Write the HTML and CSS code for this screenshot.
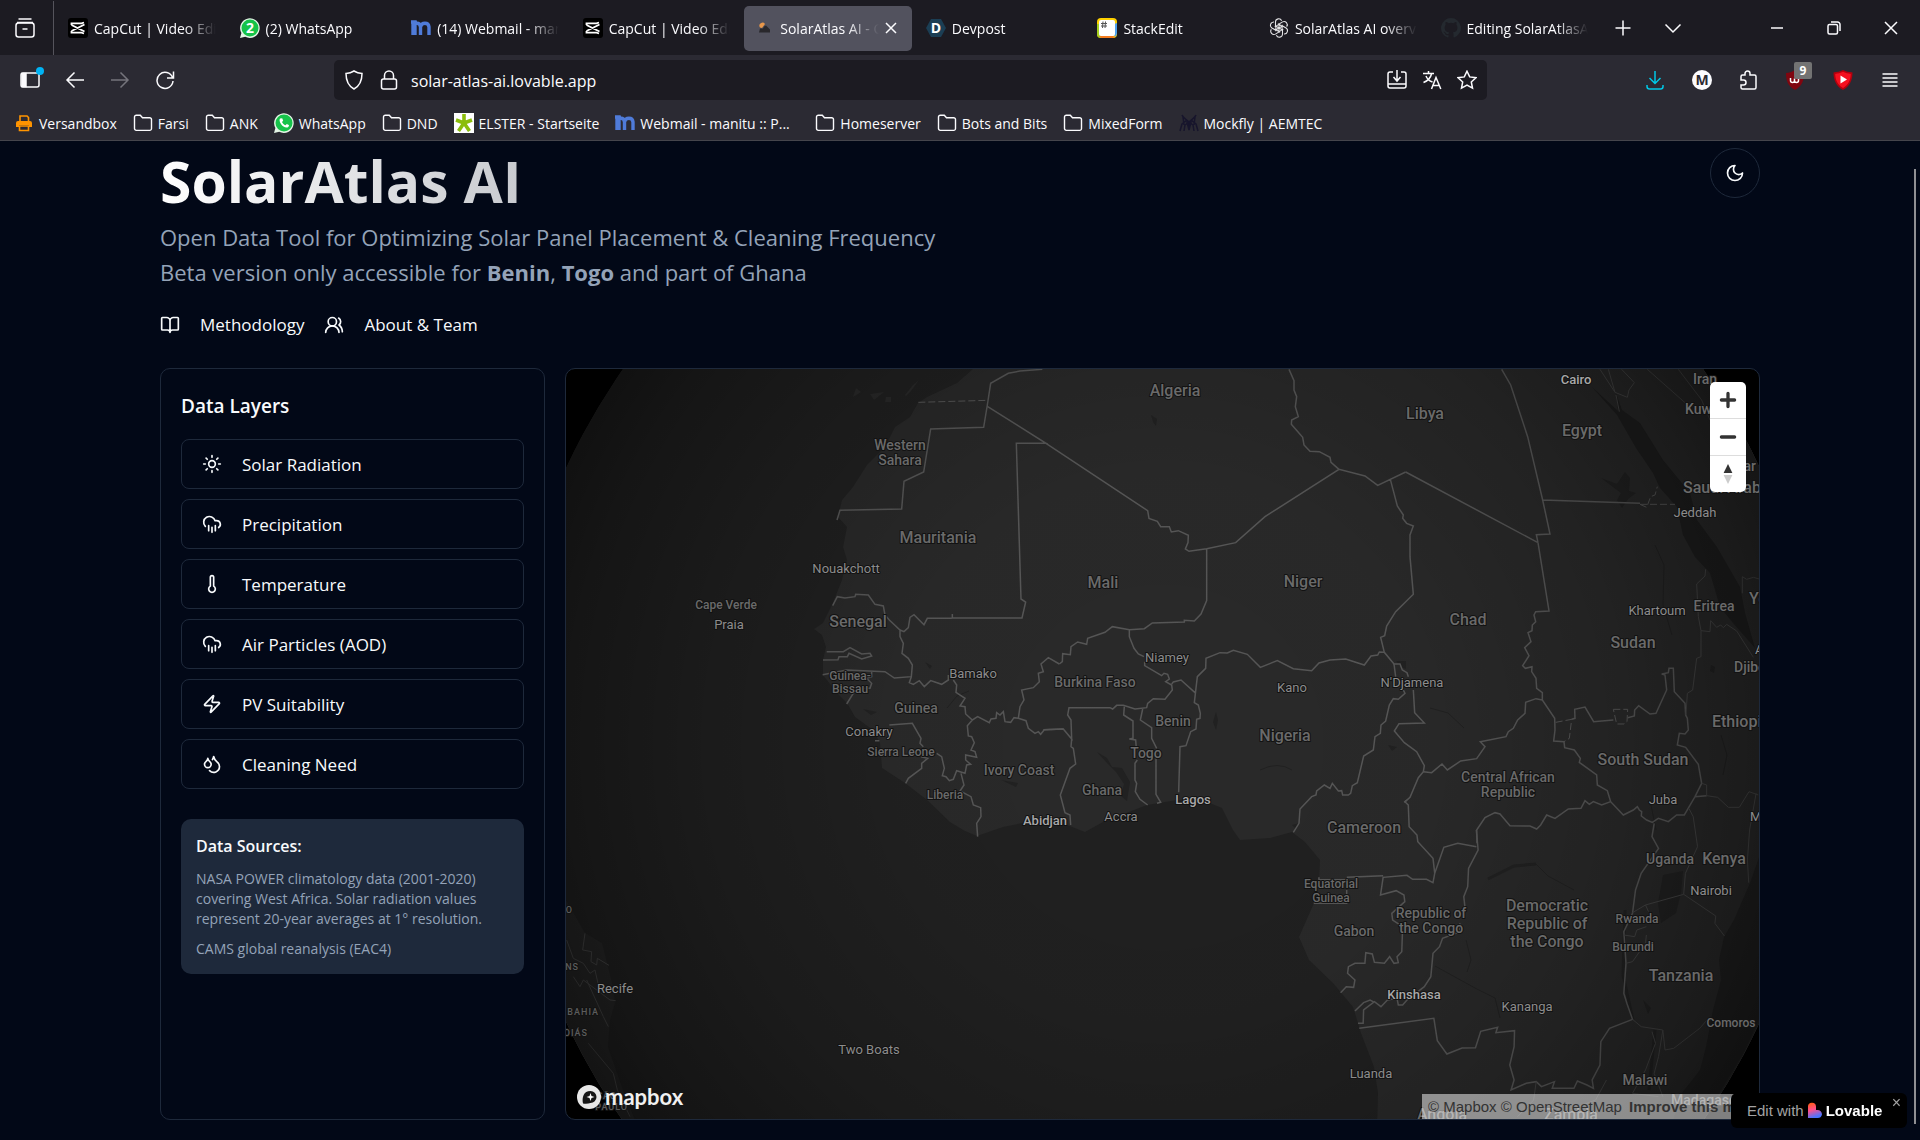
FILE: index.html
```html
<!DOCTYPE html>
<html lang="en">
<head>
<meta charset="utf-8">
<meta name="viewport" content="width=device-width, initial-scale=1">
<title>SolarAtlas AI</title>
<link rel="stylesheet" href="styles.css">
</head>
<body>
<svg class="defs" aria-hidden="true">
  <symbol id="i-folder" viewBox="0 0 20 20"><path d="M1.5 4a1.8 1.8 0 0 1 1.8-1.800h4l2.200 2.600h7.200a1.800 1.800 0 0 1 1.800 1.800v9a1.800 1.800 0 0 1-1.800 1.800H3.300a1.800 1.800 0 0 1-1.800-1.800z" fill="none" stroke="currentColor" stroke-width="1.400"/></symbol>
  <symbol id="i-capcut" viewBox="0 0 20 20"><rect width="20" height="20" rx="3" fill="#000"/><path d="M3.500 7V5.300h10L16 4.500M3.500 7l13 6.500M3.500 13v1.700h10l2.500.8M3.500 13l13-6.500" fill="none" stroke="#fff" stroke-width="1.800"/></symbol>
  <symbol id="i-manitu" viewBox="0 0 20 20"><path d="M0 4h4v13M2 17V4M2 9c1-5 7-5 7.500 0v8M9.500 9c1-5 8-5 8.500 0v8" fill="none" stroke="#4f7bd9" stroke-width="3.400"/></symbol>
  <symbol id="i-rain" viewBox="0 0 24 24"><path d="M4 14.899A7 7 0 1 1 15.710 8h1.790a4.500 4.500 0 0 1 2.500 8.242M16 14v6M8 14v6M12 16v6"/></symbol>
</svg>

<div class="browser">
  <div class="tabbar">
    <button class="tabview" aria-label="Recent browsing"><svg viewBox="0 0 20 20" class="line"><path d="M3.500 1h13M2 4.500h16" /><rect x="1" y="5" width="18" height="14" rx="2.500"/><path d="M7.500 11h5"/></svg></button>
    <nav class="tabs" aria-label="Tabs">
      <a class="tab" href="#"><svg class="ico"><use href="#i-capcut"/></svg><span>CapCut | Video Editor</span></a>
      <a class="tab" href="#"><svg class="ico" viewBox="0 0 20 20"><path d="M0 20l1.400-5A9.800 9.800 0 1 1 5.200 18.700z" fill="#e4f5e6"/><circle cx="10" cy="10" r="8.500" fill="#16c34a"/><text x="10" y="15" class="fav-text">2</text></svg><span>(2) WhatsApp</span></a>
      <a class="tab" href="#"><svg class="ico"><use href="#i-manitu"/></svg><span>(14) Webmail - manitu</span></a>
      <a class="tab" href="#"><svg class="ico"><use href="#i-capcut"/></svg><span>CapCut | Video Editor</span></a>
      <div class="tab tab-active"><svg class="ico" viewBox="0 0 20 20"><path d="M6 9.500a3 3 0 1 1 5-3.500L8 10z" fill="#e8974a"/><path d="M5 14.500l1-4h3l1-2 2-1 2 2 2 2v3z" fill="#29282c"/></svg><span>SolarAtlas AI - Open</span><button aria-label="Close tab"><svg viewBox="0 0 12 12" class="line"><path d="M1 1l10 10M11 1L1 11"/></svg></button></div>
      <a class="tab" href="#"><svg class="ico" viewBox="0 0 20 20"><path d="M5 1h10l5 9-5 9H5l-5-9z" fill="#1b3e54"/><text x="10" y="15" class="fav-text">D</text></svg><span>Devpost</span></a>
      <a class="tab" href="#"><svg class="ico" viewBox="0 0 20 20"><rect width="20" height="20" rx="4" fill="#ffd100"/><path d="M0 6v10a4 4 0 0 0 4 4h8L6 6z" fill="#a5cf1f"/><path d="M20 5v10a5 5 0 0 1-2 4L12 8z" fill="#4ea1ee"/><path d="M2 18h14l2 1-2 1H4z" fill="#f47c20"/><rect x="2" y="2" width="16" height="16" rx="2" fill="#fff"/><path d="M4 5.500h6M4 8h6M6 3.500l-.5 6.500M8.500 3.500L8 10" stroke="#555" stroke-width="1" fill="none"/></svg><span>StackEdit</span></a>
      <a class="tab" href="#"><svg class="ico" viewBox="0 0 20 20"><g fill="none" stroke="#e4e4e6" stroke-width="1.200" transform="translate(1 1) scale(.9)"><path id="knot" d="M10 10.500V5.500l4-2.300a3.600 3.600 0 0 1 4.500 5.300M13.500 8L8.700 5.200"/><use href="#knot" transform="rotate(60 10 10)"/><use href="#knot" transform="rotate(120 10 10)"/><use href="#knot" transform="rotate(180 10 10)"/><use href="#knot" transform="rotate(240 10 10)"/><use href="#knot" transform="rotate(300 10 10)"/></g></svg><span>SolarAtlas AI overview</span></a>
      <a class="tab" href="#"><svg class="ico" viewBox="0 0 16 16"><path fill="#24292f" d="M8 0a8 8 0 0 0-2.530 15.590c.4.070.55-.17.55-.38v-1.490C4 14.090 3.480 13.200 3.320 12.750c-.09-.23-.48-.94-.82-1.130-.28-.15-.68-.52-.01-.53.63-.01 1.080.58 1.230.82.720 1.210 1.870.87 2.330.66.070-.52.280-.87.510-1.070-1.780-.2-3.640-.89-3.640-3.950 0-.87.310-1.590.82-2.150-.08-.2-.36-1.020.08-2.120 0 0 .67-.21 2.200.82a7.600 7.600 0 0 1 4 0c1.530-1.040 2.200-.82 2.200-.82.440 1.100.16 1.920.08 2.120.51.560.82 1.270.82 2.150 0 3.070-1.870 3.750-3.650 3.950.29.250.54.73.54 1.480v2.200c0 .21.150.46.550.38A8 8 0 0 0 8 0z"/></svg><span>Editing SolarAtlasAI</span></a>
    </nav>
    <div class="tab-tools">
      <button aria-label="New tab"><svg viewBox="0 0 18 18" class="line"><path d="M9 1.500v15M1.500 9h15"/></svg></button>
      <button aria-label="List all tabs"><svg viewBox="0 0 18 18" class="line"><path d="M1.500 5.500L9 13l7.500-7.500"/></svg></button>
    </div>
    <div class="win-tools">
      <button aria-label="Minimize"><svg viewBox="0 0 14 14" class="line"><path d="M1 7h12"/></svg></button>
      <button aria-label="Restore"><svg viewBox="0 0 14 14" class="line"><rect x="1" y="3.500" width="9.500" height="9.500" rx="1.500"/><path d="M4 1h6.500A2.500 2.500 0 0 1 13 3.500V10"/></svg></button>
      <button aria-label="Close"><svg viewBox="0 0 14 14" class="line"><path d="M1 1l12 12M13 1L1 13"/></svg></button>
    </div>
  </div>

  <div class="toolbar">
    <div class="nav-tools">
      <button aria-label="Sidebar" class="has-dot"><svg viewBox="0 0 20 20" class="line"><rect x="1" y="3" width="18" height="14" rx="2"/><path d="M2 3.500h4v13H2z" fill="currentColor"/></svg></button>
      <button aria-label="Back"><svg viewBox="0 0 20 20" class="line"><path d="M19 10H2M9.500 2.500L2 10l7.500 7.500"/></svg></button>
      <button aria-label="Forward" class="dim"><svg viewBox="0 0 20 20" class="line"><path d="M1 10h17M10.500 2.500L18 10l-7.500 7.500"/></svg></button>
      <button aria-label="Reload"><svg viewBox="0 0 20 20" class="line"><path d="M17.500 7.500A8 8 0 1 0 18 11M18.500 1.500v6.500H12"/></svg></button>
    </div>
    <div class="urlbar">
      <svg class="ico" viewBox="0 0 20 20"><path class="line" d="M10 1c2.500 1.600 5 2.300 8 2.500 0 7-1.500 12-8 15.500C3.500 15.500 2 10.500 2 3.500 5 3.300 7.500 2.600 10 1z"/></svg>
      <svg class="ico" viewBox="0 0 20 20"><g class="line"><rect x="2.500" y="9" width="15" height="10" rx="2"/><path d="M5.500 9V5.500a4.500 4.500 0 0 1 9 0V9"/></g></svg>
      <input type="text" aria-label="Address" value="solar-atlas-ai.lovable.app">
      <button aria-label="Install"><svg viewBox="0 0 20 20" class="line"><path d="M6 2H3a2 2 0 0 0-2 2v12a2 2 0 0 0 2 2h14a2 2 0 0 0 2-2V4a2 2 0 0 0-2-2h-3M1 14h18M10 0v10M6.500 7l3.500 4 3.500-4"/></svg></button>
      <button aria-label="Translate"><svg viewBox="0 0 20 20" class="line"><path d="M1 3.500h11M6.500 1v2.500M9.500 4c-1 4-4 7-8 8.500M4 6c1 2.500 3.500 5 6.500 6M9.500 19l4.500-11.500L18.800 19M11 15.500h6.500"/></svg></button>
      <button aria-label="Bookmark"><svg viewBox="0 0 20 20" class="line"><path d="M10 1.200l2.700 5.700 6.200.8-4.600 4.300 1.200 6.200L10 15.200l-5.500 3 1.200-6.200L1.100 7.700l6.200-.8z"/></svg></button>
    </div>
    <div class="ext-tools">
      <button aria-label="Downloads" class="cyan"><svg viewBox="0 0 20 20" class="line"><path d="M10 1v12M4.500 8l5.500 5.500L15.500 8M2 15v1.500A2.500 2.500 0 0 0 4.500 19h11a2.500 2.500 0 0 0 2.500-2.500V15"/></svg></button>
      <button aria-label="Account"><svg viewBox="0 0 20 20"><circle cx="10" cy="10" r="10" fill="#fbfbfe"/><text x="10" y="15" class="acct">M</text></svg></button>
      <button aria-label="Extensions"><svg viewBox="0 0 20 20" class="line"><path d="M6 5V3.500a2.500 2.500 0 0 1 5 0V5h4.500A1.500 1.500 0 0 1 17 6.500v11a1.500 1.500 0 0 1-1.500 1.500h-12A1.500 1.500 0 0 1 2 17.500V15h2.500a2.500 2.500 0 0 0 0-5H2V6.500A1.500 1.500 0 0 1 3.500 5z"/></svg></button>
      <button aria-label="Blocker, 9" class="blocker"><svg viewBox="0 0 20 20"><path d="M9 0c3 2 6 3 9 3 0 8-2 13-9 17C2 16 0 11 0 3c3 0 6-1 9-3z" fill="#800610"/><path d="M4.500 8v2.500a2 2 0 0 0 4 0V8.500v2a2 2 0 0 0 4 0V8" fill="none" stroke="#fff" stroke-width="1.500"/></svg><span class="count">9</span></button>
      <button aria-label="Ad blocker"><svg viewBox="0 0 20 20"><path d="M10 0c3 1.500 6 2 9.500 2.500C19.500 10 17 16 10 20 3 16 .5 10 .5 2.500 4 2 7 1.500 10 0z" fill="#b3000d"/><path d="M10 1.800c2.600 1.200 5 1.800 7.800 2.100C17.600 10 15.500 14.700 10 18z M10 1.800C7.400 3 5 3.600 2.200 3.900 2.400 10 4.500 14.700 10 18z" fill="#f5101f"/><path d="M7.500 5.500v8l6.500-4z" fill="#fff"/></svg></button>
      <button aria-label="Menu"><svg viewBox="0 0 20 20" class="line"><path d="M2.500 4h15M2.500 8h15M2.500 12h15M2.500 16h15"/></svg></button>
    </div>
  </div>

  <nav class="bookmarks" aria-label="Bookmarks">
    <a href="#"><svg class="ico" viewBox="0 0 20 20"><path d="M6 8V3h7l1.500 1.500V8" fill="none" stroke="#ff9400" stroke-width="1.600"/><path d="M2 14v-4a2 2 0 0 1 2-2h12a2 2 0 0 1 2 2v4h-3v-2H5v2z" fill="#ff9400"/><path d="M5.500 13v4.500h9V13z" fill="none" stroke="#ff9400" stroke-width="1.600"/></svg>Versandbox</a>
    <a href="#"><svg class="ico"><use href="#i-folder"/></svg>Farsi</a>
    <a href="#"><svg class="ico"><use href="#i-folder"/></svg>ANK</a>
    <a href="#"><svg class="ico" viewBox="0 0 20 20"><path d="M0 20l1.400-5A9.800 9.800 0 1 1 5.200 18.700z" fill="#e4f5e6"/><circle cx="10" cy="10" r="8.500" fill="#16c34a"/><path d="M6 5.500c-2 3 3 10 7.500 9 1.500-.5 1.700-2 1.300-2.400l-2-1.100-1.300 1.300c-1.600-.6-2.800-1.800-3.500-3.400L9.200 7.700 8.200 5.300z" fill="#fff"/></svg>WhatsApp</a>
    <a href="#"><svg class="ico"><use href="#i-folder"/></svg>DND</a>
    <a href="#"><svg class="ico" viewBox="0 0 20 20"><path fill="#fff" d="M0 0h20v20H0z"/><path d="M10 10V1M10 10l8-3M10 10l5.500 8M10 10l-5.500 8M10 10L2 7" stroke="#8bbd0c" stroke-width="3.600"/></svg>ELSTER - Startseite</a>
    <a href="#" class="wide"><svg class="ico"><use href="#i-manitu"/></svg>Webmail - manitu :: P...</a>
    <a href="#"><svg class="ico"><use href="#i-folder"/></svg>Homeserver</a>
    <a href="#"><svg class="ico"><use href="#i-folder"/></svg>Bots and Bits</a>
    <a href="#"><svg class="ico"><use href="#i-folder"/></svg>MixedForm</a>
    <a href="#"><svg class="ico" viewBox="0 0 20 20"><g fill="none" stroke="#17152c" stroke-width="1.500"><path d="M3 2c1 3 4 4 7 7 3-3 6-4 7-7M1 18l2-7 5-4M19 18l-2-7-5-4M5 18l1-6 3-2M15 18l-1-6-3-2M4 4l1 8M16 4l-1 8"/><path d="M8 9h4l-2 8z" fill="#17152c"/></g></svg>Mockfly | AEMTEC</a>
  </nav>
</div>

<main class="site">
  <header class="site-head">
    <div>
      <h1>SolarAtlas AI</h1>
      <p>Open Data Tool for Optimizing Solar Panel Placement &amp; Cleaning Frequency</p>
      <p>Beta version only accessible for <strong>Benin</strong>, <strong>Togo</strong> and part of Ghana</p>
      <nav class="links" aria-label="Site">
        <a href="#"><svg viewBox="0 0 24 24" class="lucide"><path d="M12 7v14M3 18a1 1 0 0 1-1-1V4a1 1 0 0 1 1-1h5a4 4 0 0 1 4 4 4 4 0 0 1 4-4h5a1 1 0 0 1 1 1v13a1 1 0 0 1-1 1h-6a3 3 0 0 0-3 3 3 3 0 0 0-3-3z"/></svg>Methodology</a>
        <a href="#"><svg viewBox="0 0 24 24" class="lucide"><path d="M18 21a8 8 0 0 0-16 0"/><circle cx="10" cy="8" r="5"/><path d="M22 20c0-3.370-2-6.500-4-8a5 5 0 0 0-.45-8.300"/></svg>About &amp; Team</a>
      </nav>
    </div>
    <button class="theme" aria-label="Toggle theme"><svg viewBox="0 0 24 24" class="lucide"><path d="M12 3a6 6 0 0 0 9 9 9 9 0 1 1-9-9Z"/></svg></button>
  </header>

  <div class="workspace">
    <section class="panel">
      <h2>Data Layers</h2>
      <div class="layers">
        <button><svg viewBox="0 0 24 24" class="lucide"><circle cx="12" cy="12" r="4"/><path d="M12 2v2M12 20v2M4.930 4.930l1.410 1.410M17.660 17.660l1.410 1.410M2 12h2M20 12h2M6.340 17.660l-1.410 1.410M19.070 4.930l-1.410 1.410"/></svg>Solar Radiation</button>
        <button><svg class="lucide"><use href="#i-rain"/></svg>Precipitation</button>
        <button><svg viewBox="0 0 24 24" class="lucide"><path d="M14 4v10.540a4 4 0 1 1-4 0V4a2 2 0 0 1 4 0Z"/></svg>Temperature</button>
        <button><svg class="lucide"><use href="#i-rain"/></svg>Air Particles (AOD)</button>
        <button><svg viewBox="0 0 24 24" class="lucide"><path d="M4 14a1 1 0 0 1-.78-1.630l9.900-10.200a.5.5 0 0 1 .86.46l-1.920 6.020A1 1 0 0 0 13 10h7a1 1 0 0 1 .78 1.630l-9.900 10.200a.5.5 0 0 1-.86-.46l1.920-6.020A1 1 0 0 0 11 14z"/></svg>PV Suitability</button>
        <button><svg viewBox="0 0 24 24" class="lucide"><path d="M7 16.300c2.200 0 4-1.830 4-4.050 0-1.160-.57-2.260-1.710-3.190S7.290 6.750 7 5.300c-.29 1.450-1.140 2.840-2.290 3.760S3 11.100 3 12.250c0 2.220 1.800 4.050 4 4.050z"/><path d="M12.560 6.600A10.970 10.970 0 0 0 14 3.020c.5 2.500 2 4.900 4 6.500s3 3.500 3 5.500a6.980 6.980 0 0 1-11.910 4.970"/></svg>Cleaning Need</button>
      </div>
      <div class="sources">
        <h3>Data Sources:</h3>
        <p>NASA POWER climatology data (2001-2020) covering West Africa. Solar radiation values represent 20-year averages at 1° resolution.</p>
        <p>CAMS global reanalysis (EAC4)</p>
      </div>
    </section>

    <section class="map" aria-label="Map">
      <svg class="globe" viewBox="566 369 1193 750" preserveAspectRatio="xMidYMid slice">
        <defs>
          <radialGradient id="shade" gradientUnits="userSpaceOnUse" cx="1163" cy="745" r="658">
            <stop offset="0" stop-color="#000" stop-opacity="0"/>
            <stop offset=".4" stop-color="#000" stop-opacity=".02"/>
            <stop offset=".7" stop-color="#000" stop-opacity=".17"/>
            <stop offset=".9" stop-color="#000" stop-opacity=".34"/>
            <stop offset="1" stop-color="#000" stop-opacity=".48"/>
          </radialGradient>
          <clipPath id="disc"><circle cx="1163" cy="745" r="658"/></clipPath>
        </defs>
        <g clip-path="url(#disc)">
          <path d="M560 360h1210v770H560z" fill="#202020"/>
          <!-- Africa and Arabia -->
          <path fill="#292929" d="M973 369L957 383 927 397 918 403 910 417 895 427 885 447 867 465 853 487 842 500 838 517 847 527 843 547 847 560 842 580 832 605 823 623 814 629 822 635 826 647 823 660 823 675 837 693 847 703 855 717 873 730 880 743 882 768 905 783 927 800 950 822 965 831 977 836 1003 827 1027 822 1067 825 1085 832 1103 822 1147 805 1177 800 1207 802 1222 808 1233 830 1240 840 1270 838 1292 832 1305 842 1320 860 1319 880 1314 903 1299 937 1309 960 1333 983 1353 1007 1361 1033 1374 1067 1378 1093 1377 1130H1670L1682 1093 1700 1070 1706 1047 1713 1010 1721 980 1719 960 1724 937 1734 920 1750 883 1765 840V360H980z"/>
          <path fill="#262626" d="M566 900L585 933 602 943 613 987 615 1003 610 1020 608 1047 623 1090 637 1125H560V890z"/>
          <path fill="#262626" d="M1765 1005L1745 1050 1715 1100 1700 1125H1765z"/>
          <!-- Red Sea and lakes -->
          <path fill="#1e1e1e" d="M1592 387L1617 415 1636 448 1653 473 1660 488 1677 507 1683 535 1695 557 1710 573 1720 607 1733 623 1755 648 1745 613 1740 587 1717 547 1697 520 1690 493 1663 460 1640 423 1622 410 1616 393 1618 411z"/>
          <g fill="#212121">
            <path d="M1663 875l20-4-2 22-5 20-15 10-3-20zM1097 752l10 6 5 9 10 1 8 14-3 19-6-5 3-12-8-12-8-8zM1396 661h10v8l-5-2zM1601 478l16 6 8-12 5 6-1 13 7 2-8 6-6 9-5-8 4-7zM1151 415l6 4-1 7-3-4zM1213 722l3-10 2 8-2 10zM1388 745l9 2-5 4zM1292 825l8-2-4 6zM1001 780l17 3-2 4zM863 709l14 3-6 3zM925 662l7 4-2 3zM1711 665l4 2-1 6-4-2zM1643 1000l8 8-3 6z"/>
          </g>
          <path fill="#292929" d="M856 388l5 4-8 5zM870 394l14-2-10 8zM886 397h5v5h-6zM905 395l8-10 6-5-8 11-5 5z"/>
          <g fill="none" stroke="#212121" stroke-width="1">
            <path stroke-width="3" d="M1625 910l-2 65 10 45M1655 1030l-6 60M1488 879l26-13 22-2"/>
            <path d="M1536 864l12 12 26 14M1466 940l5 20-4 12M1650 800l6 30M1721 735l6 20-4 20M1430 708l18 5 16 15M1655 545l9 20-1 40 9 30M1500 1018l-5-20-20-10-40-22M1260 770q18-9 32 0M947 708l10-12 12-5"/>
          </g>
          <!-- Borders: north-west -->
          <g class="border" transform="translate(560 360) scale(.33333)">
            <path d="M1447 28L1380 33 1345 40 1292 70 1282 135 1271 202 1112 207 1091 336 1032 364 1025 447 840 451 831 480M1282 139L1458 250H1369L1383 717 1397 726 1386 774H1177V762M1175 775H1102L1092 794 1062 764 1050 772 1045 803 1032 815 1020 810 988 780 975 765 970 738 945 733 925 705 887 703 885 710 855 714 832 710 818 737M1020 812V830L1030 850 1026 880 1045 895 1057 915 1054 950 1003 954 975 935 860 930 788 944M800 875H850L870 863 905 882 930 880 935 888 905 897 867 880 862 890 837 890 834 899 789 900"/>
            <path d="M1054 950L1048 968 1060 973 1078 962 1093 980 1112 962 1145 973 1165 960V945M1180 960L1190 975 1188 997 1215 1015 1200 1038 1215 1040 1217 1062 1237 1080 1253 1070 1288 1088 1293 1077 1308 1075 1310 1058 1320 1065 1330 1055 1335 1085 1352 1087 1362 1073 1375 1075 1398 1082 1405 1105 1425 1120 1435 1115 1442 1123 1453 1109 1510 1107M1375 1075L1380 1040 1392 1020 1385 990 1420 983 1438 965 1435 940 1450 935 1443 912 1465 893 1498 912M860 1032L880 1000 895 985 930 985 935 970 920 955 935 950V935M945 1142H958M988 1095L1057 1090 1083 1135 1080 1150 1090 1160M1083 1190L1103 1195 1085 1210V1225L1045 1255 1037 1270M1130 1180L1145 1190 1153 1225 1147 1247 1158 1250 1168 1262 1180 1258 1190 1232 1215 1240 1220 1215 1232 1213 1217 1200V1185L1250 1192 1245 1175 1233 1170 1243 1148 1235 1130 1225 1128 1222 1097 1237 1080M1203 1240L1212 1275 1200 1293 1233 1310 1240 1335 1262 1343 1263 1370 1250 1390 1253 1430"/>
            <path class="dash" d="M1075 127L1282 121"/>
          </g>
          <!-- Borders: Sahel and Gulf of Guinea -->
          <g class="border" transform="translate(1000 360) scale(.33333)">
            <path d="M138 250L443 452 447 475 472 484 482 500 508 500 514 516 535 512 565 526 564 548 556 567 567 574 620 566 707 548 795 470 1017 328 1095 348 1133 376 1217 336M867 28L882 62V90L890 110 886 140 895 170 875 180 874 193 908 232 912 255 930 274 958 275 990 292 993 307 1017 328M1171 358L1192 438 1210 465 1208 475 1220 490 1240 498 1230 525V590L1240 703 1187 755 1160 798 1154 827 1142 832 1153 877 1182 912 1200 912 1207 930 1221 938 1225 950M620 566V722L603 762 583 783 553 781V786L457 789 433 806 388 809 337 800 315 817 263 835 260 853 233 846 213 860 211 884 188 881 187 905 178 912M388 809V830L402 865 415 882 432 890M434 905V917L485 947 492 940 503 943 508 957 497 965 515 975 517 990 495 1018 460 1016 443 1030 440 1043 405 1047 370 1036 350 1036 338 1047 330 1043 207 1043 203 1065 213 1080 215 1137 190 1107 130 1109"/>
            <path d="M515 972L520 966 543 960 585 998M215 1137L213 1160 220 1165 227 1212 210 1225 181 1305 195 1358 210 1365 212 1395M373 1040L371 1065 399 1083V1135L388 1137 407 1140 409 1165M412 1200L405 1210V1260L410 1270 406 1295 420 1318 443 1335M428 1047L421 1080 455 1103V1135L470 1165M468 1195V1303L482 1327 471 1330M536 1297L540 1160 558 1157 572 1115 588 1107 590 1078 600 1075 601 1060 595 1035 583 1028 592 950 617 925 618 895 660 878 682 879 700 871 742 883 781 922 832 902 880 926 935 932 957 909 990 900 1037 897 1093 915 1113 888 1133 885 1138 876 1153 877M1182 912L1187 950M1210 990L1215 1000 1195 1018 1180 1016 1168 1035 1157 1083 1143 1095 1141 1120 1125 1130 1120 1170 1091 1188 1072 1268 1057 1277 1052 1300 1045 1305 1028 1305 1025 1292 1015 1293 997 1270 990 1285 973 1275 950 1293 948 1305 935 1310 900 1347 897 1390 880 1417M1240 990L1244 1058 1273 1089 1197 1091 1183 1113 1213 1148 1250 1175 1273 1217 1270 1235 1255 1253 1230 1312 1213 1327"/>
          </g>
          <!-- Borders: Nile basin -->
          <g class="border" transform="translate(1400 360) scale(.33333)">
            <path d="M305 28L332 75 383 230 428 420 450 522 409 524 414 548M17 336L414 548 447 753 407 755 402 765 407 785 397 795 396 812 384 818 393 845 374 863 387 887 368 917 376 925 396 920 395 935 408 955 410 985 427 998V1020L464 1075 465 1110 461 1143 492 1145 494 1163 523 1170 541 1195 538 1207 590 1245 592 1275 622 1292 632 1325 670 1365 700 1350 712 1340 718 1350 725 1355 724 1368 740 1380 757 1387 775 1375 805 1385 830 1365 853 1365 885 1310 920 1307M428 420L720 430M427 1020L408 1016 377 1027 375 1060 353 1080 340 1105 325 1115 318 1130 241 1145 255 1160 230 1196 182 1203 142 1230 126 1212 95 1238 70 1235M515 1078L525 1075 524 1048 555 1041 581 1085 640 1080M683 1073L703 1068 704 1050 716 1037 750 1062 768 1060 800 990 795 945 785 942 805 938 807 925 820 925 823 995 855 1030 857 1065 862 1075 865 1110 855 1122 838 1120 832 1155 857 1162 895 1213 905 1270 885 1310M632 1325L605 1335 580 1325 568 1333 555 1322 543 1345 505 1347 465 1375 440 1365 422 1395 410 1407 390 1398 330 1397 300 1362 285 1358 255 1373 230 1410 231 1450"/>
            <path class="faint" d="M917 628L915 648 890 672 895 770 903 812V890L890 895 878 990 862 1000 858 1065M903 812L930 815 932 782 950 802 962 795 970 803 980 793 1010 813 1060 892M1027 700V650L1040 658 1060 652 1078 657M920 1307L953 1312 985 1342 1018 1342 1047 1295 1075 1305M600 28L645 97 625 28M645 97L682 112 687 90 703 68 665 28M648 105L658 155M742 28L855 128M835 28L905 120 930 180M905 1270L920 1275V1307"/>
            <path class="dash" d="M720 433L825 433M720 433L740 442 752 410 765 405 772 380M467 1087L515 1078 508 1135 492 1145M640 1048H683L681 1085 672 1092H650z"/>
          </g>
          <!-- Borders: Congo basin and Great Lakes -->
          <g class="border" transform="translate(1240 780) scale(.4337 .33333)">
            <path d="M385 60L380 65 388 75 390 140 408 165 410 185 445 235 449 280 445 308 430 298 398 298 385 286 330 292 324 345 360 332 378 345 380 365 350 400 352 420 375 440 373 515 362 530 365 548 355 550 345 530 333 550 310 547 305 522 290 518 288 550 265 550 250 560 248 580 265 600 262 622 245 620 232 638M449 280L470 202 502 190 545 200M248 299V292L330 287M182 292V299H248M170 370H246V330M545 150L549 210 527 265 525 320 516 350 519 385M507 430V455L467 475 460 500 445 520 440 590 425 620 385 660 375 675 365 675 362 655 340 660 325 680 310 665 285 690 284 730 272 730M265 693L285 668 300 660 310 667M275 745L447 715 455 782 477 822 512 804 543 803 555 754 594 742 590 758 633 752 632 800 622 855 632 900 625 930 660 910 683 905 695 920 725 905 720 925 770 925 778 903 800 915 815 925 812 900 830 855 832 785 852 745 905 718 892 670 885 640 890 550 885 455 905 400 912 330 925 280 965 205 950 170 955 130"/>
            <path class="faint" d="M683 905L677 960 640 1010M845 900L820 960 780 980M935 375L1023 343 1097 408 1095 430 1117 468M935 375L905 398M935 375L942 395M890 550L905 545 935 490 937 465M885 465L910 470 915 450 937 440M1023 343L1027 280 1055 200 1045 110 1035 85M1173 308L1170 240 1175 150 1190 40M905 718L925 740 975 750 980 810 1000 805 1060 745 1080 715M975 750L965 830 955 880 975 950M950 755L958 790 935 870 905 940 965 950"/>
          </g>
          <g class="border" transform="translate(560 800) scale(.33333)">
            <path class="faint" d="M75 400L68 450 95 455 93 485 110 495 112 475 147 496M20 420L40 475 70 490 90 520 105 510 115 555M40 530L60 560 70 540 150 600 167 602M80 540L130 650 145 680M85 730L160 820 172 870 210 950"/>
          </g>
          <circle cx="1163" cy="745" r="658" fill="url(#shade)"/>
        </g>
        <g class="lbl lg">
          <text x="1175" y="396">Algeria</text><text x="1425" y="419">Libya</text><text x="1582" y="436">Egypt</text>
          <text x="938" y="543">Mauritania</text><text x="1103" y="588">Mali</text><text x="1303" y="587">Niger</text>
          <text x="1468" y="625">Chad</text><text x="1633" y="648">Sudan</text><text x="858" y="627">Senegal</text>
          <text x="1285" y="741">Nigeria</text><text x="1364" y="833">Cameroon</text><text x="1643" y="765">South Sudan</text>
          <text x="1724" y="864">Kenya</text><text x="1681" y="981">Tanzania</text>
          <text x="1547" y="911">Democratic</text><text x="1547" y="929">Republic of</text><text x="1547" y="947">the Congo</text>
          <text x="1442" y="1120">Angola</text><text x="1571" y="1120">Zambia</text>
          <text x="1712" y="727" class="start">Ethiopia</text><text x="1683" y="493" class="start">Saudi Arabia</text><text x="1749" y="604" class="start">Yemen</text>
        </g>
        <g class="lbl md">
          <text x="900" y="450">Western</text><text x="900" y="465">Sahara</text><text x="1095" y="687">Burkina Faso</text>
          <text x="1019" y="775">Ivory Coast</text><text x="1102" y="795">Ghana</text><text x="916" y="713">Guinea</text>
          <text x="1173" y="726">Benin</text><text x="1146" y="758">Togo</text>
          <text x="1508" y="782">Central African</text><text x="1508" y="797">Republic</text><text x="1714" y="611">Eritrea</text>
          <text x="1670" y="864">Uganda</text><text x="1431" y="918">Republic of</text><text x="1431" y="933">the Congo</text>
          <text x="1354" y="936">Gabon</text><text x="1645" y="1085">Malawi</text>
          <text x="1734" y="672" class="start">Djibouti</text><text x="1693" y="384" class="start">Iran</text><text x="1685" y="414" class="start">Kuwait</text><text x="1671" y="1105" class="start">Madagascar</text><text x="1756" y="471" class="end">Qatar</text>
        </g>
        <g class="lbl sm">
          <text x="726" y="609">Cape Verde</text><text x="850" y="680">Guinea-</text><text x="850" y="693">Bissau</text>
          <text x="901" y="756">Sierra Leone</text><text x="945" y="799">Liberia</text><text x="1331" y="888">Equatorial</text><text x="1331" y="902">Guinea</text>
          <text x="1637" y="923">Rwanda</text><text x="1633" y="951">Burundi</text><text x="1731" y="1027">Comoros</text>
        </g>
        <g class="lbl city">
          <text x="1695" y="517">Jeddah</text><text x="1657" y="615">Khartoum</text><text x="1412" y="687">N'Djamena</text>
          <text x="1292" y="692">Kano</text><text x="1167" y="662">Niamey</text><text x="973" y="678">Bamako</text><text x="846" y="573">Nouakchott</text>
          <text x="729" y="629">Praia</text><text x="869" y="736">Conakry</text><text x="1121" y="821">Accra</text><text x="1663" y="804">Juba</text>
          <text x="1711" y="895">Nairobi</text><text x="1527" y="1011">Kananga</text><text x="1371" y="1078">Luanda</text>
          <text x="615" y="993">Recife</text><text x="869" y="1054">Two Boats</text>
          <text x="1750" y="821" class="start">Mogadishu</text><text x="1755" y="654" class="start">Aden</text>
          <text x="1576" y="384" class="major">Cairo</text><text x="1045" y="825" class="major">Abidjan</text><text x="1193" y="804" class="major">Lagos</text><text x="1414" y="999" class="major">Kinshasa</text>
        </g>
        <g class="lbl state">
          <text x="573" y="913">MARANHÃO</text><text x="579" y="970">TOCANTINS</text><text x="599" y="1015">BAHIA</text><text x="588" y="1036">GOIÁS</text><text x="617" y="1099">SÃO</text><text x="628" y="1110">PAULO</text>
        </g>
      </svg>
      <div class="zoom">
        <button aria-label="Zoom in"><svg viewBox="0 0 20 20"><path d="M10 4v12M4 10h12"/></svg></button>
        <button aria-label="Zoom out"><svg viewBox="0 0 20 20"><path d="M4 10h12"/></svg></button>
        <button aria-label="Reset bearing"><svg viewBox="0 0 20 20"><path d="M6 9l4-8 4 8z" class="north"/><path d="M6 11l4 8 4-8z" class="south"/></svg></button>
      </div>
      <a class="logo" href="#"><svg viewBox="0 0 24 24"><circle cx="12" cy="12" r="12" fill="#e8e8e8"/><path d="M6 18.500c-1.200-6 .5-12.500 7.500-12.500a6 6 0 0 1 0 12c-2 .8-5 .9-7.500.5z" fill="#161616"/><path d="M13.500 8l1 3 3 1-3 1-1 3-1-3-3-1 3-1z" fill="#fff"/></svg>mapbox</a>
      <div class="attrib"><a href="#">© Mapbox</a> <a href="#">© OpenStreetMap</a> <a href="#" class="improve">Improve this map</a></div>
    </section>
  </div>
</main>

<div class="scrollbar"></div>
<aside class="badge">
  <a href="#">Edit with <svg viewBox="0 0 14 18"><defs><linearGradient id="heart" x1="0" y1="0" x2=".3" y2="1"><stop offset=".1" stop-color="#ff5a1f"/><stop offset=".5" stop-color="#ff4f8b"/><stop offset="1" stop-color="#4b73ff"/></linearGradient></defs><path d="M0 5a4 4 0 0 1 8-.5V8h1.500A4.500 4.500 0 0 1 14 12.500 4.500 4.500 0 0 1 9.500 16H0z" fill="url(#heart)"/></svg><b>Lovable</b></a>
  <button aria-label="Dismiss">×</button>
</aside>
</body>
</html>
```
FILE: styles.css
```css
* { box-sizing: border-box; }
body {
  margin: 0;
  min-height: 100vh;
  display: flex;
  flex-direction: column;
  background: #020817;
  color: #f8fafc;
  font-family: "Open Sans", "Noto Sans", sans-serif;
  overflow: hidden;
}
h1, h2, h3, p { margin: 0; }
a { color: inherit; text-decoration: none; }
button { margin: 0; padding: 0; border: 0; background: none; color: inherit; font: inherit; }
svg { display: block; flex: none; }
.defs { position: absolute; width: 0; height: 0; }
.line { fill: none; stroke: currentColor; stroke-width: 1.5; }
.ico { width: 20px; height: 20px; }

/* Browser chrome */
.browser { color: #fbfbfe; background: #2b2a33; border-bottom: 1px solid #45454c; font-size: 14px; }
.tabbar { display: flex; align-items: center; height: 55px; padding-top: 1px; background: #1c1b22; }
.tabview { display: grid; place-items: center; width: 54px; height: 54px; padding-right: 4px; border-right: 1px solid #55545c; }
.tabview svg { width: 20px; height: 20px; }
.tabs { display: flex; flex: 0 1 1546px; min-width: 0; padding-left: 2px; }
.tab { flex: 1 1 0; min-width: 0; display: flex; align-items: center; gap: 6px; height: 45px; margin: 0 2px; padding: 0 10px; border-radius: 5px; }
.tab span { flex: 1; overflow: hidden; white-space: nowrap; -webkit-mask-image: linear-gradient(to left, transparent, #000 32px); mask-image: linear-gradient(to left, transparent, #000 32px); }
.tab-active { background: #52525e; }
.tab-active button svg { width: 12px; height: 12px; }
.tab-active button { margin-right: 5px; }
.fav-text { font: 700 14px "Open Sans", sans-serif; fill: #fff; text-anchor: middle; }
.tab-tools { display: flex; gap: 32px; padding-left: 14px; }
.tab-tools svg { width: 18px; height: 18px; }
.win-tools { display: flex; gap: 43px; margin-left: auto; padding-right: 22px; }
.win-tools svg { width: 14px; height: 14px; }

.toolbar { display: flex; align-items: center; height: 50px; }
.toolbar button { position: relative; }
.toolbar svg { width: 20px; height: 20px; }
.nav-tools { flex: 0 0 334px; display: flex; gap: 25px; padding-left: 20px; }
.has-dot::after { content: ""; position: absolute; top: -3px; right: -4px; width: 8px; height: 8px; border-radius: 50%; background: #00b3f4; }
.dim { color: #75747c; }
.urlbar { flex: 1; display: flex; align-items: center; gap: 15px; height: 40px; padding: 0 10px; border-radius: 5px; background: #1c1b22; }
.urlbar input { flex: 1; min-width: 0; margin-left: -3px; padding: 2px 0 0; border: 0; outline: 0; background: none; color: #fbfbfe; font: 16px "Open Sans", sans-serif; }
.ext-tools { flex: 0 0 433px; display: flex; justify-content: flex-end; gap: 27px; padding-right: 20px; }
.cyan { color: #00c8e6; }
.acct { font: 700 14px "Open Sans", sans-serif; text-anchor: middle; fill: #2b2a33; }
.count { position: absolute; top: -8px; right: -6px; width: 18px; height: 17px; border-radius: 2px; background: #737373; color: #fff; font-size: 12px; line-height: 17px; font-weight: 700; text-align: center; }

.bookmarks { display: flex; align-items: center; gap: 16px; height: 35px; padding: 1px 14px 0; white-space: nowrap; }
.bookmarks a { display: flex; align-items: center; gap: 5px; }
.bookmarks .wide { width: 184px; }

/* Page */
.site { flex: 1; display: flex; flex-direction: column; width: 100%; max-width: 1640px; margin: 0 auto; padding: 7px 20px 20px; }
.site-head { display: flex; justify-content: space-between; align-items: flex-start; padding-bottom: 18px; }
.site-head h1 { width: max-content; margin-bottom: 6px; font-size: 57px; line-height: 66px; font-weight: 700; background: linear-gradient(to right, #fff, #c8cacf); -webkit-background-clip: text; background-clip: text; color: transparent; }
.site-head p { font-size: 22px; line-height: 35px; color: #94a3b8; }
.links { display: flex; gap: 20px; margin-top: 10px; font-size: 17px; line-height: 50px; }
.links a { display: flex; align-items: center; gap: 20px; }
.lucide { width: 20px; height: 20px; fill: none; stroke: currentColor; stroke-width: 2; stroke-linecap: round; stroke-linejoin: round; }
.theme { display: grid; place-items: center; width: 50px; height: 50px; border: 1px solid #1e293b; border-radius: 50%; }

.workspace { flex: 1; display: grid; grid-template-columns: repeat(4, minmax(0, 1fr)); gap: 20px; }
.panel, .map { border: 1px solid #1e293b; border-radius: 10px; }
.panel { padding: 20px; }
.panel h2 { margin-bottom: 15px; font-size: 19px; line-height: 35px; font-weight: 600; }
.layers { display: grid; gap: 10px; margin-bottom: 30px; }
.layers button { display: flex; align-items: center; gap: 20px; height: 50px; padding: 0 20px; border: 1px solid #1e293b; border-radius: 8px; font-size: 17px; }
.sources { display: grid; gap: 10px; padding: 15px; border-radius: 10px; background: #1e293b; }
.sources h3 { font-size: 16px; line-height: 25px; font-weight: 600; }
.sources p { font-size: 14px; line-height: 20px; color: #94a3b8; }

/* Map */
.map { position: relative; grid-column: span 3; overflow: hidden; background: #000; font-family: "Liberation Sans", sans-serif; }
.globe { position: absolute; inset: 0; width: 100%; height: 100%; }
.border path { fill: none; stroke: #565656; stroke-width: 1.5; vector-effect: non-scaling-stroke; }
.border .faint { stroke: #444; stroke-width: 1; }
.border .dash { stroke-dasharray: 7 3; stroke-width: 1; }
.lbl { font-family: Roboto, sans-serif; text-anchor: middle; fill: #6a6a6a; stroke: #121212; stroke-width: 2; stroke-linejoin: round; paint-order: stroke; }
.lg { font-size: 16px; font-weight: 500; }
.md { font-size: 14px; font-weight: 500; }
.sm { font-size: 12px; font-weight: 500; }
.city { font-size: 13px; fill: #8c8c8c; }
.major { font-weight: 500; fill: #a8a8a8; }
.state { font-size: 9px; font-weight: 500; letter-spacing: 1px; text-anchor: end; fill: #5c5c5c; }
.start { text-anchor: start; }
.end { text-anchor: end; }
.zoom { position: absolute; top: 13px; right: 13px; width: 36px; border-radius: 5px; background: #fff; }
.zoom button { display: grid; place-items: center; width: 36px; height: 36px; }
.zoom button + button { height: 37px; border-top: 1px solid #ddd; }
.zoom svg { width: 22px; height: 22px; fill: none; stroke: #333; stroke-width: 3; stroke-linecap: round; }
.zoom .north { fill: #333; stroke: none; }
.zoom .south { fill: #ccc; stroke: none; }
.logo { position: absolute; left: 11px; bottom: 9px; display: flex; align-items: center; gap: 4px; color: #f0f0f0; font: 700 22px/26px Lato, sans-serif; }
.logo svg { width: 24px; height: 24px; }
.attrib { position: absolute; right: 0; bottom: 0; width: 337px; padding-left: 6px; overflow: hidden; background: rgba(255, 255, 255, .5); color: #333; font-size: 15px; line-height: 25px; white-space: nowrap; }
.improve { margin-left: 3px; font-weight: 700; }

.scrollbar { position: fixed; top: 169px; right: 4px; bottom: 16px; width: 2px; background: #8f8f93; }
.badge { position: fixed; right: 13px; bottom: 12px; width: 176px; height: 35px; padding: 0 16px; border-radius: 6px; background: #000; color: #a3a3a3; font: 15px/36px "Liberation Sans", sans-serif; }
.badge a { display: flex; align-items: center; gap: 4px; white-space: nowrap; }
.badge svg { width: 14px; height: 18px; }
.badge b { color: #fff; }
.badge button { position: absolute; top: 2px; right: 6px; line-height: 16px; font-size: 16px; }
```
